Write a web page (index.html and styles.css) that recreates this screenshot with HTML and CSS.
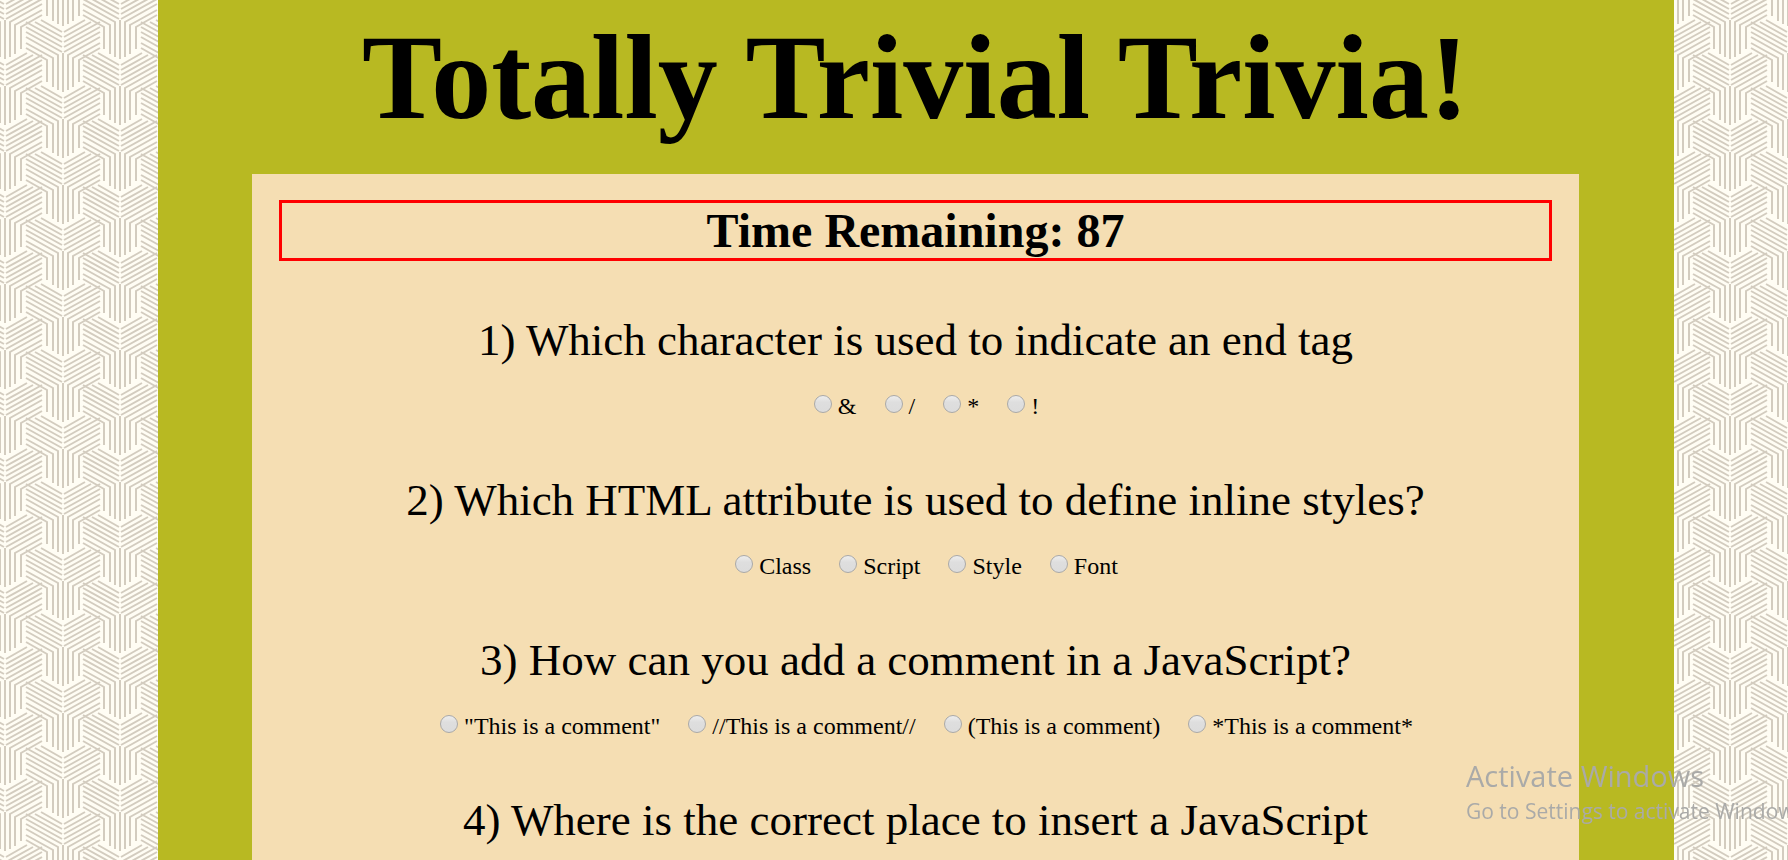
FILE: index.html
```
<!DOCTYPE html>
<html lang="en">
<head>
<meta charset="utf-8">
<title>Totally Trivial Trivia!</title>
<link rel="stylesheet" href="styles.css">
</head>
<body>
<svg class="backdrop" aria-hidden="true">
  <defs>
    <g id="half">
      <path d="M1 0L22 -12M1 5L28 -10M1 10L37 -10M1 15L37 -5M1 20L37 0M37 5L5 23V58M37 11L10 26V55M37 16L16 28V50"/>
    </g>
    <g id="weave">
      <use href="#half"/>
      <use href="#half" transform="scale(-1 1)"/>
      <path d="M0 21V60"/>
    </g>
    <pattern id="wallpaper" width="115" height="66" patternUnits="userSpaceOnUse" x="5" y="0">
      <g class="slats">
        <use href="#weave" x="58" y="32"/>
        <use href="#weave" x="58" y="-34"/>
        <use href="#weave" x="0" y="-1"/>
        <use href="#weave" x="0" y="65"/>
        <use href="#weave" x="115" y="-1"/>
        <use href="#weave" x="115" y="65"/>
      </g>
    </pattern>
  </defs>
  <rect width="100%" height="100%" fill="url(#wallpaper)"/>
</svg>
<main class="page">
  <h1 class="title">Totally Trivial Trivia!</h1>
  <form class="quiz">
    <h2 class="timer">Time Remaining: 87</h2>
    <fieldset class="question">
      <legend class="prompt">1) Which character is used to indicate an end tag</legend>
      <div class="options">
        <label class="option"><input type="radio" name="q1">&amp;</label>
        <label class="option"><input type="radio" name="q1">/</label>
        <label class="option"><input type="radio" name="q1">*</label>
        <label class="option"><input type="radio" name="q1">!</label>
      </div>
    </fieldset>
    <fieldset class="question">
      <legend class="prompt">2) Which HTML attribute is used to define inline styles?</legend>
      <div class="options">
        <label class="option"><input type="radio" name="q2">Class</label>
        <label class="option"><input type="radio" name="q2">Script</label>
        <label class="option"><input type="radio" name="q2">Style</label>
        <label class="option"><input type="radio" name="q2">Font</label>
      </div>
    </fieldset>
    <fieldset class="question">
      <legend class="prompt">3) How can you add a comment in a JavaScript?</legend>
      <div class="options">
        <label class="option"><input type="radio" name="q3">"This is a comment"</label>
        <label class="option"><input type="radio" name="q3">//This is a comment//</label>
        <label class="option"><input type="radio" name="q3">(This is a comment)</label>
        <label class="option"><input type="radio" name="q3">*This is a comment*</label>
      </div>
    </fieldset>
    <fieldset class="question">
      <legend class="prompt">4) Where is the correct place to insert a JavaScript</legend>
    </fieldset>
  </form>
</main>
<aside class="watermark">
  <p class="watermark-title">Activate Windows</p>
  <p class="watermark-text">Go to Settings to activate Windows.</p>
</aside>
</body>
</html>
```
FILE: styles.css
```
* { box-sizing: border-box; }
html { height: 100%; overflow: hidden; }
body {
  height: 100%;
  margin: 0;
  overflow: hidden;
  background: #fffdf4;
  color: #000;
  font-family: "Liberation Serif", "Times New Roman", serif;
}
.backdrop {
  position: fixed;
  inset: 0;
  z-index: -1;
  width: 100%;
  height: 100%;
}
.slats {
  fill: none;
  stroke: #d3ccbf;
  stroke-width: 2;
}
.page {
  min-height: 100%;
  margin: 0 114px 0 158px;
  padding: 9px 95px 0 94px;
  background: #b8b922;
}
.title {
  margin: 0;
  padding-bottom: 27px;
  font-size: 120px;
  line-height: 138px;
  text-align: center;
}
.quiz {
  padding: 26px 27px;
  background: #f5deb3;
  text-align: center;
}
.timer {
  margin: 0 0 53px;
  border: 3px solid #f00;
  font-size: 48px;
  line-height: 55px;
}
.question {
  min-width: 0;
  height: 160px;
  margin: 0;
  padding: 0;
  border: 0;
}
.question:last-child { height: auto; }
.prompt {
  width: 100%;
  padding: 0;
  font-size: 45px;
  line-height: 52px;
}
.options {
  display: flex;
  justify-content: center;
  gap: 28px;
  padding: 26px 0 0 22px;
}
.option {
  display: flex;
  gap: 6px;
  font-size: 24px;
  line-height: 28px;
}
.option input {
  appearance: none;
  width: 18px;
  height: 18px;
  margin: 3px 0 0;
  border: 1px solid #a9a9a9;
  border-radius: 50%;
  background: linear-gradient(#ededed, #dedede 40%, #dcdcdc);
}
.watermark {
  position: fixed;
  left: 1466px;
  bottom: 34px;
  color: #aaaaa8;
  font-family: "Open Sans", "Noto Sans", sans-serif;
  white-space: nowrap;
}
.watermark-title, .watermark-text { margin: 0; }
.watermark-title { font-size: 29px; line-height: 40px; }
.watermark-text { font-size: 21px; line-height: 30px; }
```
